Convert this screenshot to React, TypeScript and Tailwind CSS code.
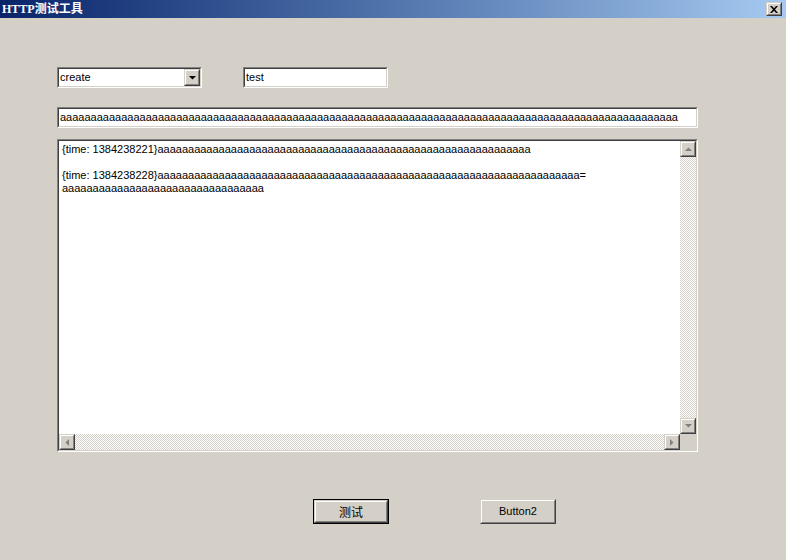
import React from "react";

const font = "font-['Tahoma','Liberation_Sans',sans-serif]";
const sunken =
  "border-t-[#808080] border-l-[#808080] border-r-white border-b-white border";
const sunkenInner =
  "border-t-[#404040] border-l-[#404040] border-r-[#d4d0c8] border-b-[#d4d0c8] border";
const checker =
  "bg-[repeating-conic-gradient(#d4d0c8_0_25%,#ffffff_0_50%)] bg-[length:2px_2px]";

function Raised({ className = "", children }: { className?: string; children?: React.ReactNode }) {
  return (
    <div className={`border border-t-[#d4d0c8] border-l-[#d4d0c8] border-r-[#404040] border-b-[#404040] ${className}`}>
      <div className="w-full h-full border border-t-white border-l-white border-r-[#808080] border-b-[#808080] bg-[#d4d0c8] flex items-center justify-center">
        {children}
      </div>
    </div>
  );
}

function Arrow({ dir, color = "#808080" }: { dir: "up" | "down" | "left" | "right"; color?: string }) {
  const pts = {
    up: "0,4 7,4 3.5,0.5",
    down: "0,0 7,0 3.5,3.5",
    left: "4,0 4,7 0.5,3.5",
    right: "0,0 0,7 3.5,3.5",
  }[dir];
  const vertical = dir === "up" || dir === "down";
  return (
    <svg width={vertical ? 7 : 4} height={vertical ? 4 : 7} viewBox={vertical ? "0 0 7 4" : "0 0 4 7"}>
      <polygon points={pts} fill={color} />
    </svg>
  );
}

function Sunken({ className = "", children }: { className?: string; children?: React.ReactNode }) {
  return (
    <div className={`${sunken} ${className}`}>
      <div className={`${sunkenInner} w-full h-full bg-white`}>{children}</div>
    </div>
  );
}

export default function App() {
  const a = (n: number) => "a".repeat(n);

  return (
    <div className={`w-[786px] h-[560px] bg-[#d4d0c8] flex flex-col ${font} text-[11px] text-black overflow-hidden`}>
      {/* Title bar */}
      <div className="h-[18px] flex items-center justify-between bg-gradient-to-r from-[#0a246a] to-[#a6caf0] pl-[2px] pr-[4px]">
        <span className="text-white font-bold text-[12px] leading-none font-['Liberation_Serif','Noto_Sans_CJK_SC',serif]">
          HTTP测试工具
        </span>
        <Raised className="w-[16px] h-[14px]">
          <svg width="8" height="7" viewBox="0 0 8 7">
            <path d="M0 0 L2 0 L4 2.2 L6 0 L8 0 L5 3.5 L8 7 L6 7 L4 4.8 L2 7 L0 7 L3 3.5 Z" fill="#000" />
          </svg>
        </Raised>
      </div>

      <div className="pl-[57px]">
        {/* Row 1 */}
        <div className="flex mt-[49px] gap-[41px]">
          <Sunken className="w-[145px] h-[21px]">
            <div className="flex h-full items-center">
              <span className="flex-1 pl-[1px] leading-none">create</span>
              <Raised className="w-[16px] h-[17px]">
                <Arrow dir="down" color="#000" />
              </Raised>
            </div>
          </Sunken>
          <Sunken className="w-[145px] h-[21px]">
            <div className="h-full flex items-center pl-[1px] leading-none">test</div>
          </Sunken>
        </div>

        {/* Long input */}
        <Sunken className="w-[641px] h-[21px] mt-[19px]">
          <div className="h-full flex items-center pl-[1px] leading-none overflow-hidden whitespace-nowrap">
            {a(101)}
          </div>
        </Sunken>

        {/* Output area */}
        <Sunken className="w-[641px] h-[313px] mt-[11px]">
          <div className="grid grid-cols-[1fr_16px] grid-rows-[1fr_16px] h-full">
            <div className="pl-[3px] pt-[2px] leading-[13px] overflow-hidden whitespace-nowrap">
              <div>{"{time: 1384238221}"}{a(61)}</div>
              <div>&nbsp;</div>
              <div>{"{time: 1384238228}"}{a(69)}=</div>
              <div>{a(33)}</div>
            </div>
            <div className={`flex flex-col justify-between ${checker}`}>
              <Raised className="w-[16px] h-[16px]"><Arrow dir="up" /></Raised>
              <Raised className="w-[16px] h-[16px]"><Arrow dir="down" /></Raised>
            </div>
            <div className={`flex justify-between ${checker}`}>
              <Raised className="w-[16px] h-[16px]"><Arrow dir="left" /></Raised>
              <Raised className="w-[16px] h-[16px]"><Arrow dir="right" /></Raised>
            </div>
            <div className="bg-[#d4d0c8]" />
          </div>
        </Sunken>

        {/* Buttons */}
        <div className="flex mt-[47px] pl-[256px] gap-[91px]">
          <div className="border border-black">
            <Raised className="w-[74px] h-[23px]">
              <span className="font-['Noto_Sans_CJK_SC',sans-serif] text-[12px] leading-none">测试</span>
            </Raised>
          </div>
          <Raised className="w-[76px] h-[25px]">
            <span className="leading-none">Button2</span>
          </Raised>
        </div>
      </div>
    </div>
  );
}
